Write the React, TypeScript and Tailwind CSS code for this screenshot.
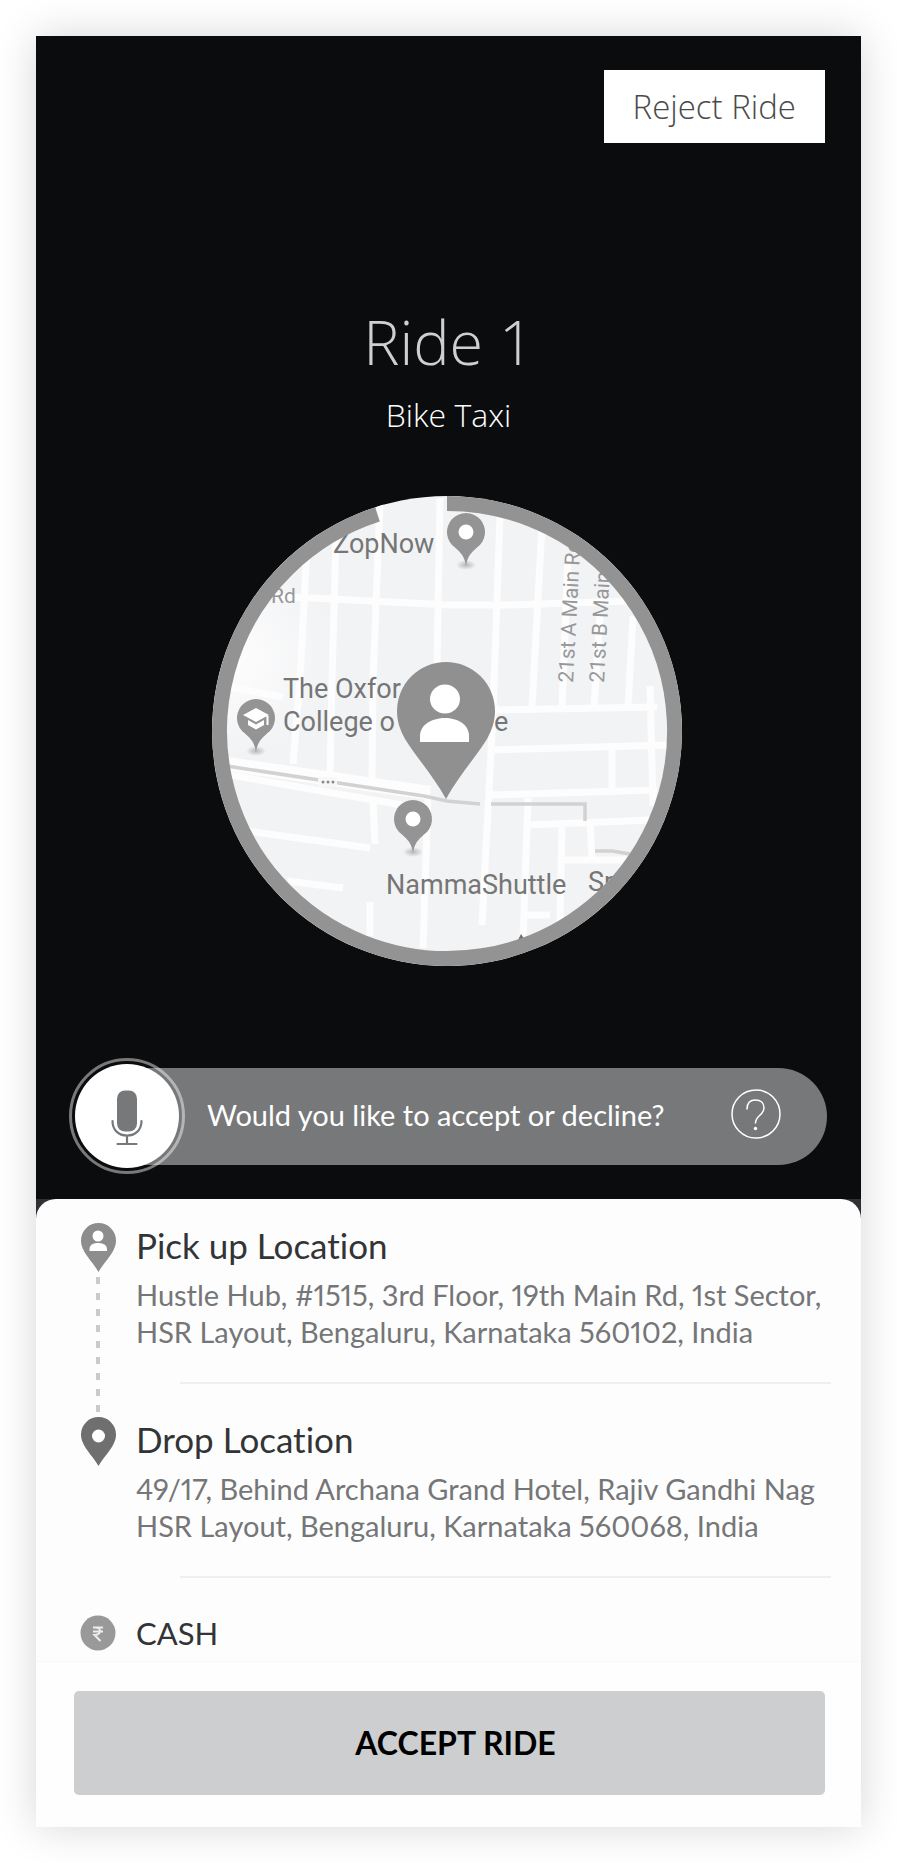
import type { ReactNode } from "react";

const ROADS = [
  "M60 100 L238 109 L295 109 L420 105",
  "M95 50 L88 184 L81 268",
  "M124 40 L120 184 L118 279",
  "M168 8 L161 184 L160 282",
  "M228 2 L225 170",
  "M288 18 L281 217 L270 429",
  "M330 30 L320 211",
  "M356 60 L350 210",
  "M388 120 L382 211",
  "M421 120 L416 211",
  "M283 214 L445 211",
  "M278 254 L455 249",
  "M278 299 L445 294",
  "M316 329 L440 324",
  "M351 364 L415 364",
  "M316 302 L311 445",
  "M350 329 L348 425",
  "M378 326 L380 362",
  "M400 252 L400 296",
  "M438 190 L441 310",
  "M311 419 L338 419",
  "M18 191 L71 201",
  "M18 279 L190 309",
  "M35 335 L158 352",
  "M161 305 L163 348",
  "M75 385 L131 392",
  "M158 406 L158 440",
  "M216 300 L211 452",
];

function SmallPin({ x, y, children }: { x: number; y: number; children?: ReactNode }) {
  return (
    <g transform={`translate(${x} ${y})`}>
      <ellipse cx="0" cy="33" rx="10" ry="5" fill="url(#pin-shadow)" />
      <path d="M0 34 C-1.5 24 -5 21 -11 15.5 A19 19 0 1 1 11 15.5 C5 21 1.5 24 0 34 Z" fill="#949495" />
      {children ?? <circle r="7.5" fill="#fff" />}
    </g>
  );
}

function RideMap() {
  return (
    <svg viewBox="0 0 470 470" className="size-[470px] max-w-full" role="img" aria-label="Pick up map">
      <defs>
        <clipPath id="map-disc">
          <circle cx="235" cy="235" r="235" />
        </clipPath>
        <radialGradient id="map-fade" gradientUnits="userSpaceOnUse" cx="20" cy="160" r="100">
          <stop offset="0" stopColor="#fdfdfe" />
          <stop offset="1" stopColor="#f2f3f4" />
        </radialGradient>
        <radialGradient id="pin-shadow">
          <stop offset="0" stopColor="#b8b8b9" />
          <stop offset="1" stopColor="#b8b8b9" stopOpacity="0" />
        </radialGradient>
      </defs>
      <g clipPath="url(#map-disc)">
        <rect width="470" height="470" fill="url(#map-fade)" />
        <g fill="none" stroke="#fdfdfe" strokeWidth="7">
          {ROADS.map((d) => (
            <path key={d} d={d} />
          ))}
          <path d="M15 268 L218 297" strokeWidth="14" />
        </g>
        <g fill="none" stroke="#d2d2d3" strokeWidth="3.5">
          <path d="M15 270 L212 300 L235 305 L268 308" />
          <path d="M279 308 H373 V325" />
          <path d="M383 355 L400 355 L418 358" />
        </g>
        <rect x="106" y="281" width="19" height="10" rx="3" fill="#f8f8f9" />
        <g fill="#8b8b8c">
          <circle cx="111" cy="286" r="1.5" />
          <circle cx="116" cy="286" r="1.5" />
          <circle cx="121" cy="286" r="1.5" />
        </g>
        <g fill="#767677" fontFamily="Roboto, sans-serif" fontSize="27">
          <text x="121" y="57">ZopNow</text>
          <text x="71" y="202">The Oxfor</text>
          <text x="71" y="235">College o</text>
          <text x="282" y="235">e</text>
          <text x="174" y="398">NammaShuttle</text>
          <text x="376" y="395">Sp</text>
        </g>
        <g fill="#98989a" fontFamily="Roboto, sans-serif" fontSize="21">
          <text x="59" y="107">Rd</text>
          <text transform="translate(361 187) rotate(-87)">21st A Main Rd</text>
          <text transform="translate(392 187) rotate(-87)">21st B Main Rd</text>
        </g>
        <path d="M306 444 l3 -6 l4 6z" fill="#6f6f70" />
        <SmallPin x={254} y={36} />
        <SmallPin x={201} y={323} />
        <SmallPin x={44} y={222}>
          <path d="M-13 -3 L0 -10 L13 -3 L0 4 Z M-8 2 L0 6.500 L8 2 V7 L0 11.500 L-8 7 Z M10.500 -2 h2 v9 h-2z" fill="#fff" />
        </SmallPin>
        <path d="M234 303 C222 281 205 262 193 243 C188 234 185 225 185 215 A49 49 0 0 1 283 215 C283 225 280 234 275 243 C263 262 246 281 234 303 Z" fill="#909091" />
        <ellipse cx="233" cy="203" rx="15" ry="14.500" fill="#fff" />
        <path d="M208 246 V240 C208 228 221 222 233 222 C245 222 257 228 257 240 V246 Z" fill="#fff" />
        <path d="M235 7.500 A227.500 227.500 0 1 1 165.500 18.400" fill="none" stroke="#939394" strokeWidth="15" />
      </g>
    </svg>
  );
}

function MicIcon() {
  return (
    <svg viewBox="0 0 32 56" className="h-14 w-8" aria-hidden="true">
      <rect x="6" y="0.500" width="20" height="41" rx="8" fill="#77787a" />
      <path d="M1.500 31 C1.500 40 7.500 45.500 16 45.500 C24.500 45.500 30.500 40 30.500 31 M16 45.500 V54 M6.500 54 H25.500" fill="none" stroke="#77787a" strokeWidth="2.200" strokeLinecap="round" />
    </svg>
  );
}

function HelpIcon() {
  return (
    <svg viewBox="0 0 50 50" className="size-[50px]" fill="none" stroke="#fff" strokeWidth="1.500" aria-hidden="true">
      <circle cx="25" cy="25" r="24" />
      <path d="M16 20 C16 14 19.500 11 24.500 11 C29.500 11 33 14 33 19 C33 26 24.500 26.500 24.500 34" strokeLinecap="round" />
      <circle cx="24.500" cy="39.500" r="1.700" fill="#fff" stroke="none" />
    </svg>
  );
}

const PIN = "M17.500 49 C13 41 5 33 2 26 C0.500 23 0 20 0 17.500 A17.500 17.500 0 0 1 35 17.500 C35 20 34.500 23 33 26 C30 33 22 41 17.500 49 Z";

function PickupPin() {
  return (
    <svg viewBox="0 0 35 49" className="h-[49px] w-[35px] shrink-0" aria-hidden="true">
      <path d={PIN} fill="#8d8d8e" />
      <circle cx="17" cy="13" r="5.500" fill="#fff" />
      <path d="M8.500 28 V26 C8.500 21.500 13 20 17 20 C21 20 26 21.500 26 26 V28 Z" fill="#fff" />
    </svg>
  );
}

function DropPin() {
  return (
    <svg viewBox="0 0 35 49" className="h-[49px] w-[35px] shrink-0" aria-hidden="true">
      <path d={PIN} fill="#6f6f70" />
      <circle cx="17.500" cy="19" r="6.500" fill="#fff" />
    </svg>
  );
}

function RupeeIcon() {
  return (
    <svg viewBox="0 0 36 36" className="size-9 shrink-0" aria-hidden="true">
      <circle cx="18" cy="18" r="17.500" fill="#99999a" />
      <path d="M13 12.500 H23 M13 16.500 H23 M14 12.500 C22 11.500 22 20 14.500 20 L20.500 26" fill="none" stroke="#ededee" strokeWidth="2" />
    </svg>
  );
}

function Stop({ icon, title, lines, connected }: { icon: ReactNode; title: string; lines: string[]; connected?: boolean }) {
  return (
    <li className="flex gap-5">
      <div className="flex w-9 shrink-0 flex-col items-center">
        {icon}
        {connected && (
          <svg className="mt-[5px] h-0 w-1 shrink-0 grow basis-0" aria-hidden="true">
            <line x1="2" y1="0" x2="2" y2="100%" stroke="#c9cacc" strokeWidth="4" strokeDasharray="7 9" />
          </svg>
        )}
      </div>
      <div className="min-w-0 flex-1">
        <h2 className="text-[35px] leading-[44px] text-[#333435]">{title}</h2>
        <p className="mt-[9px] overflow-hidden text-[29px] leading-[37px] whitespace-nowrap text-[#757677] proportional-nums">
          {lines.map((line) => (
            <span key={line} className="block">{line}</span>
          ))}
        </p>
        <hr className="mt-8 mb-[33px] ml-11 border-t-2 border-[#efeff2]" />
      </div>
    </li>
  );
}

export default function App() {
  return (
    <main className="min-h-screen bg-white p-9 font-['Lato',sans-serif]">
      <div className="flex flex-col bg-[#2f3033] shadow-[0_0_40px_rgba(0,0,0,0.16)]">
        <section className="flex flex-col items-center bg-[#0b0c0e] px-9 pt-[34px] pb-[25px]">
          <button type="button" className="h-[73px] self-end bg-white px-[29px] font-['Open_Sans',sans-serif] text-[33px] font-[350] text-[#4a4a4b]">
            Reject Ride
          </button>
          <h1 className="mt-[158px] font-['Open_Sans',sans-serif] text-[61px] leading-[82px] font-[350] text-[#cfcfd1]">Ride 1</h1>
          <p className="mt-[2px] font-['Open_Sans',sans-serif] text-[32px] leading-[60px] font-[350] text-white">Bike Taxi</p>
          <div className="mt-[51px] pr-1">
            <RideMap />
          </div>
          <div className="mt-[92px] flex w-full items-center">
            <button type="button" aria-label="Speak" className="z-10 -ml-[3px] flex size-[116px] shrink-0 items-center justify-center rounded-full border-3 border-white/45">
              <span className="flex size-[104px] items-center justify-center rounded-full bg-white pt-1">
                <MicIcon />
              </span>
            </button>
            <div className="-mr-[2px] -ml-[58px] flex h-[97px] flex-1 items-center justify-between rounded-r-full bg-[#77787a] pr-[46px] pl-20">
              <p className="pb-[2px] text-[29px] text-white">Would you like to accept or decline?</p>
              <button type="button" aria-label="Help" className="mb-1">
                <HelpIcon />
              </button>
            </div>
          </div>
        </section>
        <section className="rounded-t-[20px] bg-[#fdfdfe] pr-[30px] pl-11 [font-variant-ligatures:none]">
          <ul className="pt-6">
            <Stop
              icon={<PickupPin />}
              title="Pick up Location"
              lines={["Hustle Hub, #1515, 3rd Floor, 19th Main Rd, 1st Sector,", "HSR Layout, Bengaluru, Karnataka 560102, India"]}
              connected
            />
            <Stop
              icon={<DropPin />}
              title="Drop Location"
              lines={["49/17, Behind Archana Grand Hotel, Rajiv Gandhi Nag", "HSR Layout, Bengaluru, Karnataka 560068, India"]}
            />
            <li className="flex items-center gap-5 pb-[6px]">
              <RupeeIcon />
              <span className="text-[31px] leading-[44px] text-[#333435]">CASH</span>
            </li>
          </ul>
        </section>
        <footer className="border-t border-[#f8f8fb] bg-[#fefefe] pt-[29px] pr-9 pb-8 pl-[38px]">
          <button type="button" className="h-[104px] w-full rounded-[5px] bg-[#cdced0] pl-3 text-[32px] font-bold text-black">
            ACCEPT RIDE
          </button>
        </footer>
      </div>
    </main>
  );
}
